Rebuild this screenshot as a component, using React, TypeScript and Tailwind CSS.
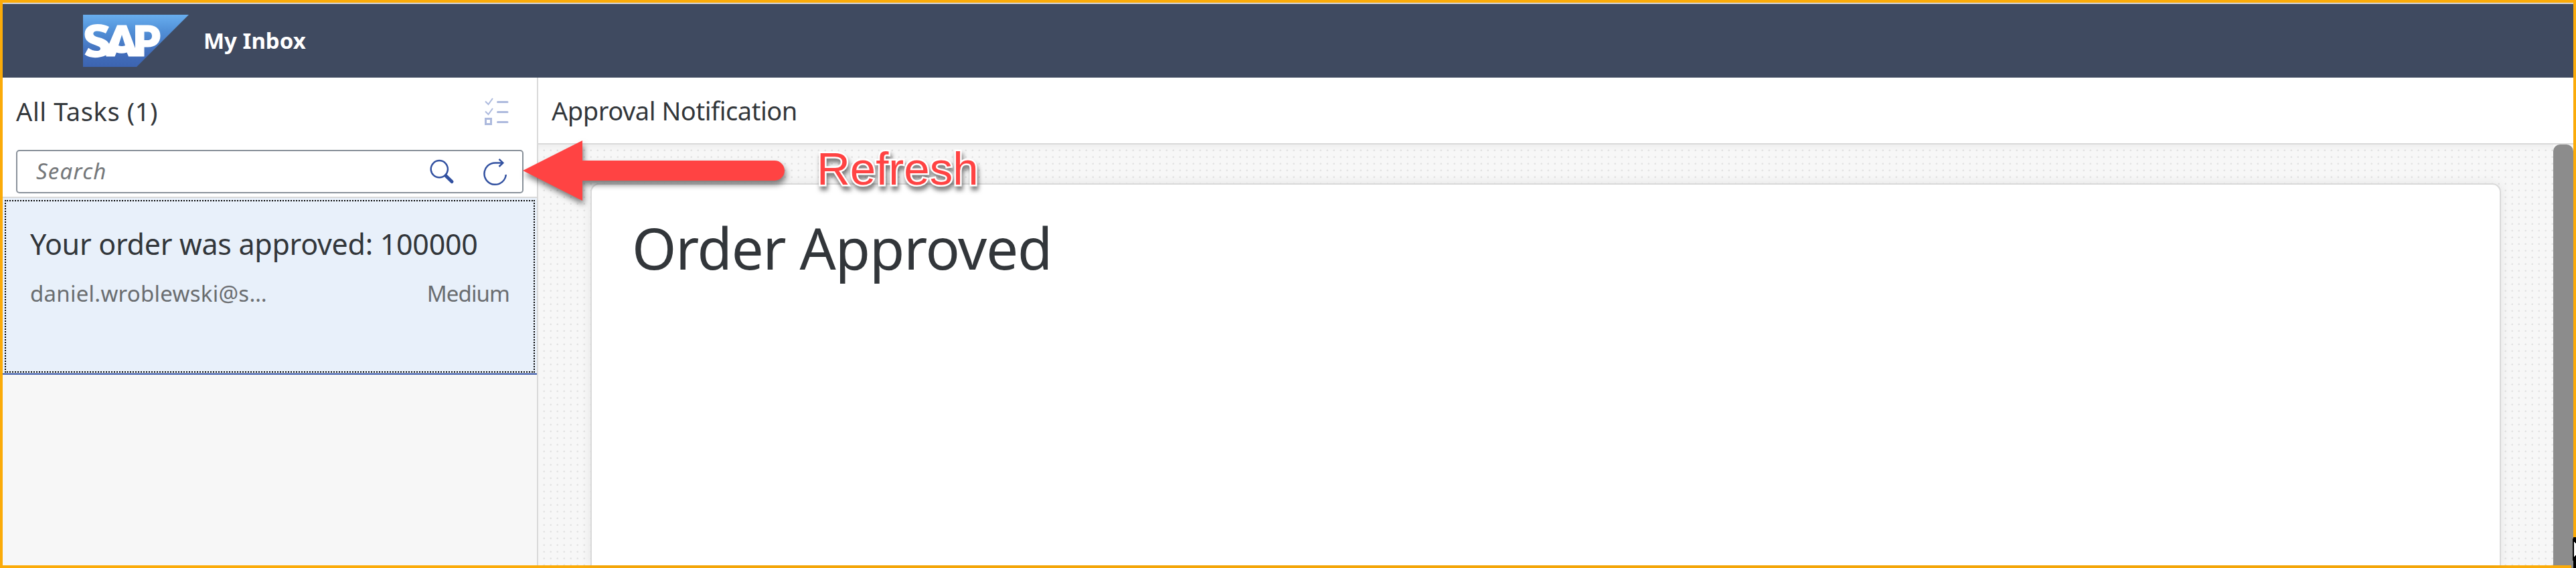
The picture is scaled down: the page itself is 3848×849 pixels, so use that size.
const dots =
  "bg-[radial-gradient(circle_at_8.7px_8.7px,#e2e2e2_0.9px,transparent_1.7px)] bg-[length:10px_10px]";

function Logo() {
  return (
    <svg className="block h-[78px] w-[158px] shrink-0" viewBox="0 0 158 78">
      <defs>
        <linearGradient id="sap" x1="0" y1="0" x2="0" y2="1">
          <stop offset="0" stopColor="#68aeef" />
          <stop offset="0.3" stopColor="#5291d8" />
          <stop offset="0.75" stopColor="#426dba" />
          <stop offset="1" stopColor="#3c64b1" />
        </linearGradient>
      </defs>
      <path d="M0 0H158L80 78H0Z" fill="url(#sap)" />
      <g fill="#fff" fillRule="evenodd">
        <path d="M78 15.5H97C108 15.5 115.500 21 115.500 31.500S108 48.500 97 48.500H91.500V62.500H68L65.500 56.500Q57.500 59 50 56.500L47.500 62.500H34.500V60.500C22 66 10 65 2.500 59.500L8 49.500C13 53.500 20 55 24 53.500C27 52 26.500 49 23.500 47.500L11 42.500C4 39 2.500 34 2.500 28.500C3 18 12 14 22 14C29 14 35 16 39 18L34 28C28 25 20 23.500 17 25.500C14 27.500 15.500 31 19 32.500C27 35 35 36 39 43.500L51 15.500H65L78 50ZM58 30L53 46Q58 48 63 46ZM91.500 25.500V38H96C100.500 38 103 36 103 31.700S100.500 25.500 96 25.500Z" />
      </g>
    </svg>
  );
}

export default function App() {
  return (
    <div className="relative flex h-[849px] w-[3848px] flex-col border-4 border-[#fbab09] bg-white font-['Noto_Sans',sans-serif] text-[#32363a]">
      <header className="flex h-[112px] shrink-0 items-center border-t-2 border-[#d9d9d9] bg-[#3f4a60] pl-[120px]">
        <Logo />
        <h1 className="ml-[22px] whitespace-nowrap text-[33px] leading-[44px] font-bold text-white">My Inbox</h1>
      </header>
      <div className="flex min-h-0 flex-1">
        <aside className="flex w-[800px] shrink-0 flex-col border-r-2 border-[#d9d9d9] bg-[#f7f7f7]">
          <div className="flex h-[108px] shrink-0 items-center justify-between bg-white pr-[40px] pb-[6px] pl-[20px]">
            <h2 className="mb-[3px] whitespace-nowrap text-[38px] leading-[50px] tracking-[0.6px]">All Tasks (1)</h2>
            <svg className="h-[42px] w-[40px]" viewBox="722 146 40 42" fill="none" stroke="#acb9dd">
              <path d="M725 151.500L729.500 156L736 147M725 166.500L729.500 171L736 162" strokeWidth="2" />
              <path d="M743.500 152.500H758M743.500 167.500H758M743.500 182.500H758" strokeWidth="3" strokeLinecap="round" />
              <rect x="725.5" y="177.500" width="8" height="8" strokeWidth="3" />
            </svg>
          </div>
          <div className="flex h-[72px] shrink-0 justify-center border-b-2 border-[#d9d9d9] bg-white">
            <div className="flex h-[65px] w-[758px] items-center rounded-[5px] border-2 border-[#89919a] pr-[16px] pl-[28px] text-[#74777a]">
              <span className="mb-[2px] flex-1 text-[33px] leading-[44px] tracking-[1.2px] italic">Search</span>
              <svg className="h-[49px] w-[124px]" viewBox="640 232 124 49" fill="none" stroke="#3150a0" strokeWidth="2.500">
                <circle cx="656.3" cy="252.700" r="12.600" />
                <path d="M666 262.700L675 271.500" strokeWidth="5" strokeLinecap="round" />
                <path d="M755.800 261A16.200 16.200 0 1 1 739.700 243.400H751" />
                <path d="M745.500 237.800L751.300 243.400L745.500 249" />
              </svg>
            </div>
          </div>
          <div className="h-[264px] shrink-0 border-b-2 border-[#3553a5] bg-[#e8f0fa] p-[3px]">
            <div className="h-[258px] border-2 border-dotted border-black pt-[34px] pr-[36px] pl-[36px]">
              <div className="whitespace-nowrap text-[43px] leading-[60px] tracking-[-0.3px]">Your order was approved: 100000</div>
              <div className="mt-[22px] flex justify-between text-[33px] leading-[44px] text-[#6a6d70]">
                <span className="tracking-[0.25px]">daniel.wroblewski@s…</span>
                <span className="tracking-[-0.9px]">Medium</span>
              </div>
            </div>
          </div>
        </aside>
        <main className="flex min-w-0 flex-1 flex-col">
          <div className="flex h-[100px] shrink-0 items-center border-b-2 border-[#d9d9d9] bg-white pl-[20px]">
            <h2 className="whitespace-nowrap text-[38px] leading-[50px] tracking-[-0.45px]">Approval Notification</h2>
          </div>
          <div className="flex min-h-0 flex-1 bg-[#f7f7f7]">
            <div className={"flex min-w-0 flex-1 pt-[58px] pr-[78px] pl-[78px] shadow-[inset_0_8px_8px_-4px_rgba(0,0,0,0.04)] " + dots}>
              <section className="flex-1 rounded-t-[13px] border-2 border-b-0 border-[#d9d9d9] bg-white px-[60px] pt-[34px] shadow-[0_0_16px_rgba(0,0,0,0.08)]">
                <h3 className="whitespace-nowrap text-[85px] leading-[120px] tracking-[-1.1px]">Order Approved</h3>
              </section>
            </div>
            <div className="w-[30px] rounded-t-[10px] bg-[#8c8c8c]" />
          </div>
        </main>
      </div>
      <svg className="absolute top-[202px] left-[770px] h-[110px] w-[430px] drop-shadow-[2px_6px_4px_rgba(0,0,0,0.5)]" viewBox="770 202 430 110">
        <path d="M777 251L866 206V236H1153A15 15 0 0 1 1153 266H866V296Z" fill="#ff4343" />
      </svg>
      <div className="absolute top-[209px] left-[1216px] font-['Liberation_Sans',sans-serif] text-[69px] leading-[80px] text-[#ff4343] drop-shadow-[2px_6px_3px_rgba(0,0,0,0.5)] [-webkit-text-stroke:5px_white] [paint-order:stroke_fill]">
        Refresh
      </div>
      <svg className="absolute right-[-4px] bottom-[-4px] h-[46px] w-[7px]" viewBox="0 0 7 46">
        <path d="M0 42H3V46H0Z" fill="#8c8c8c" />
        <path d="M3 0H7V46H3V35H2V2H3Z" fill="#000" />
        <path d="M4 7H5V8H6V9H7V27H6V28H5V29H4Z" fill="#fff" />
      </svg>
    </div>
  );
}
